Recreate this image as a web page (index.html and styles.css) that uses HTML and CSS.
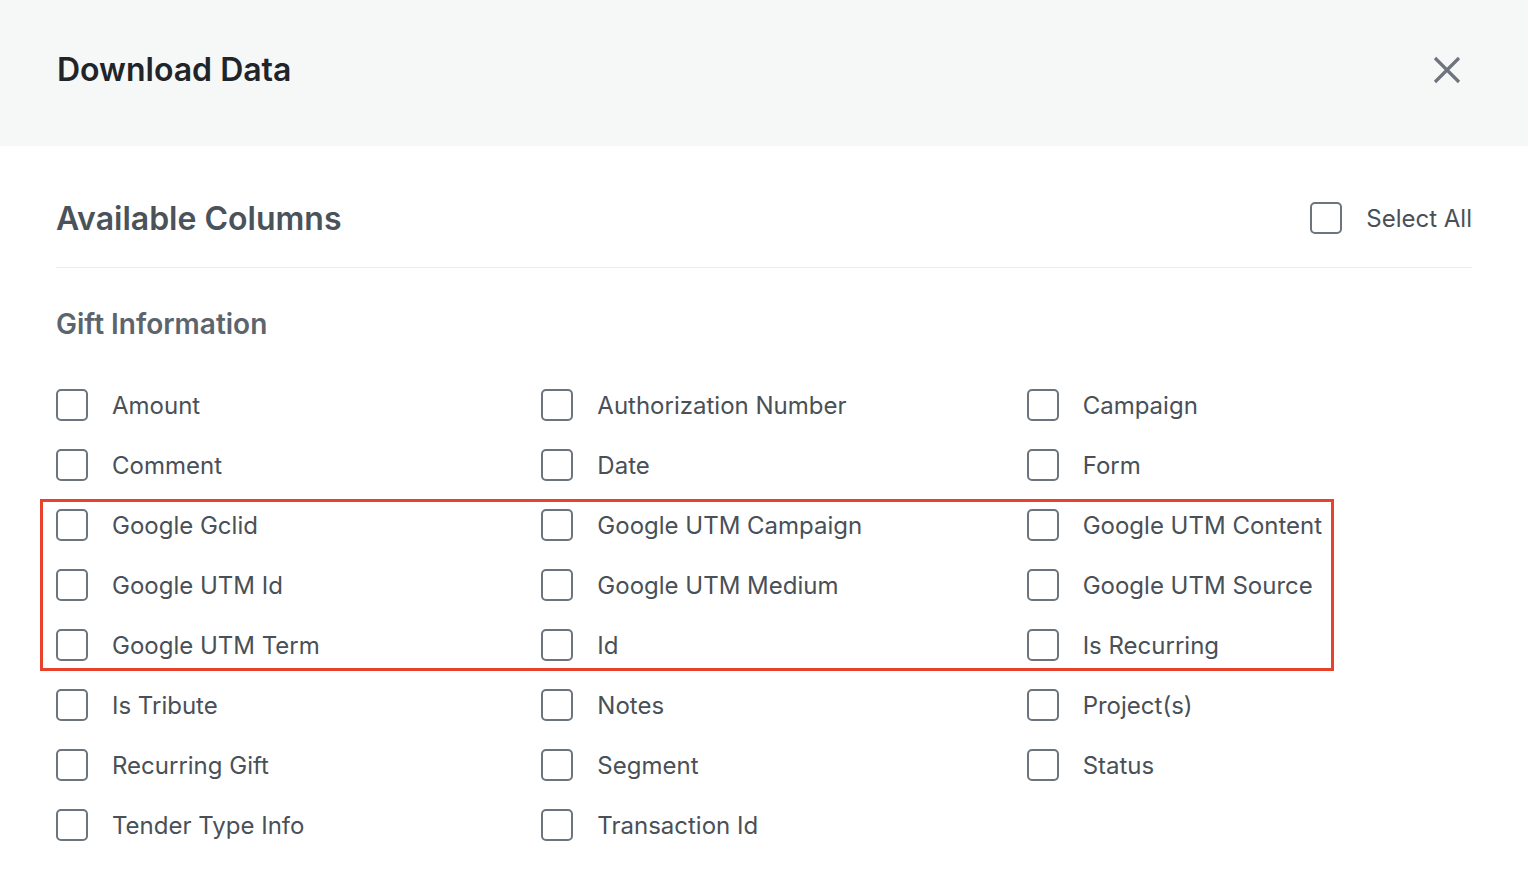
FILE: index.html
```html
<!DOCTYPE html>
<html lang="en">
<head>
  <meta charset="UTF-8" />
  <title>Download Data</title>
  <link rel="stylesheet" href="styles.css">
</head>
<body>

  <div class="modal">
    <div class="modal-header">
      <h1>Download Data</h1>
      <button class="close" aria-label="Close">
        <svg width="28" height="28" viewBox="0 0 28 28">
          <path d="M2 2 L26 26 M26 2 L2 26" stroke="#6c757d" stroke-width="3.2" fill="none"/>
        </svg>
      </button>
    </div>

    <div class="modal-body">
      <div class="section-head">
        <h2>Available Columns</h2>
        <label class="check">
          <span class="box"></span>
          <span>Select All</span>
        </label>
      </div>

      <h3>Gift Information</h3>

      <div class="grid">
        <label class="check"><span class="box"></span><span>Amount</span></label>
        <label class="check"><span class="box"></span><span>Authorization Number</span></label>
        <label class="check"><span class="box"></span><span>Campaign</span></label>
        <label class="check"><span class="box"></span><span>Comment</span></label>
        <label class="check"><span class="box"></span><span>Date</span></label>
        <label class="check"><span class="box"></span><span>Form</span></label>
        <label class="check"><span class="box"></span><span>Google Gclid</span></label>
        <label class="check"><span class="box"></span><span>Google UTM Campaign</span></label>
        <label class="check"><span class="box"></span><span>Google UTM Content</span></label>
        <label class="check"><span class="box"></span><span>Google UTM Id</span></label>
        <label class="check"><span class="box"></span><span>Google UTM Medium</span></label>
        <label class="check"><span class="box"></span><span>Google UTM Source</span></label>
        <label class="check"><span class="box"></span><span>Google UTM Term</span></label>
        <label class="check"><span class="box"></span><span>Id</span></label>
        <label class="check"><span class="box"></span><span>Is Recurring</span></label>
        <label class="check"><span class="box"></span><span>Is Tribute</span></label>
        <label class="check"><span class="box"></span><span>Notes</span></label>
        <label class="check"><span class="box"></span><span>Project(s)</span></label>
        <label class="check"><span class="box"></span><span>Recurring Gift</span></label>
        <label class="check"><span class="box"></span><span>Segment</span></label>
        <label class="check"><span class="box"></span><span>Status</span></label>
        <label class="check"><span class="box"></span><span>Tender Type Info</span></label>
        <label class="check"><span class="box"></span><span>Transaction Id</span></label>

        <div class="highlight"></div>
      </div>
    </div>
  </div>

</body>
</html>
```

FILE: styles.css
```css
body {
  margin: 0;
  font-family: 'Inter', sans-serif;
  background-color: #ffffff;
  color: #495057;
}

.modal-header {
  height: 146px;
  background-color: #f6f7f7;
  display: flex;
  align-items: center;
  justify-content: space-between;
  padding: 0 56px 7px 57px;
  box-sizing: border-box;
}

.modal-header h1 {
  margin: 0;
  font-size: 32px;
  font-weight: 600;
  color: #212529;
}

.close {
  border: none;
  background: none;
  padding: 0;
  margin: 0 11px 0 0;
  display: flex;
  cursor: pointer;
}

.modal-body {
  padding: 40px 56px;
}

.section-head {
  display: flex;
  align-items: center;
  justify-content: space-between;
  height: 64px;
  padding-bottom: 17px;
  border-bottom: 1px solid #e9ecef;
}

.section-head h2 {
  margin: 0;
  font-size: 32px;
  font-weight: 600;
  color: #4a525a;
}

h3 {
  margin: 40px 0 35px;
  height: 32px;
  line-height: 32px;
  font-size: 28px;
  font-weight: 600;
  color: #5c656e;
}

.grid {
  position: relative;
  display: grid;
  grid-template-columns: repeat(3, 1fr);
  column-gap: 40px;
  grid-auto-rows: 60px;
}

.check {
  display: flex;
  align-items: center;
  gap: 24px;
  font-size: 24px;
  color: #495057;
  cursor: pointer;
}

.box {
  width: 32px;
  height: 32px;
  box-sizing: border-box;
  border: 2px solid #6c757d;
  border-radius: 5px;
  flex-shrink: 0;
}

.highlight {
  position: absolute;
  top: 124px;
  left: -16px;
  width: 1294px;
  height: 172px;
  box-sizing: border-box;
  border: 3px solid #e8412c;
  pointer-events: none;
}
```
